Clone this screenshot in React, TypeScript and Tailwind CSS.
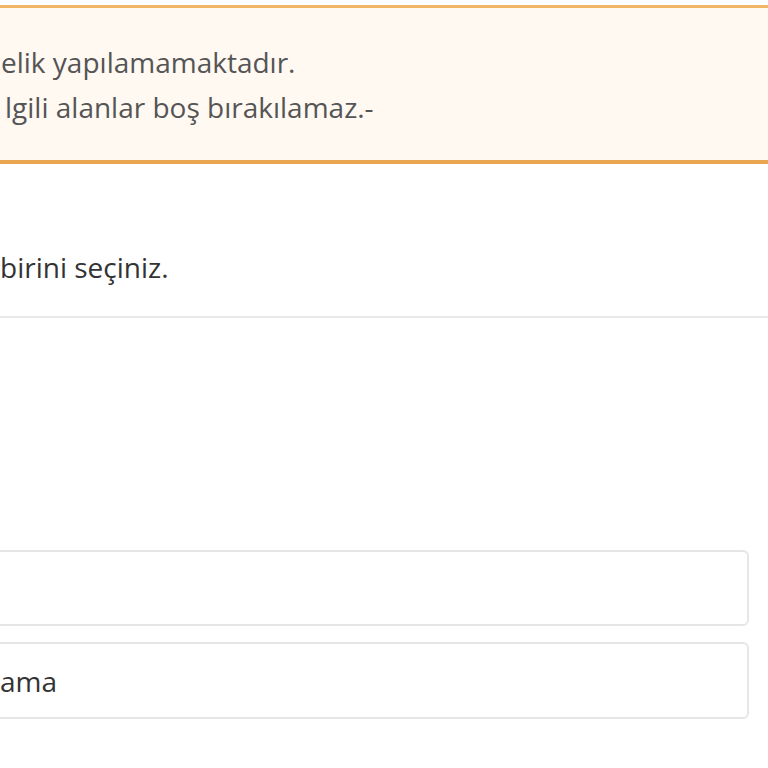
export default function App() {
  return (
    <div
      className="h-[768px] w-full overflow-hidden bg-white pt-[5px]"
      style={{ fontFamily: '"Open Sans", sans-serif' }}
    >
      {/* Warning alert */}
      <div className="border-t-[3px] border-b-[4px] border-t-[#f2b766] border-b-[#e9a54f] bg-[#fff9f2] pt-[32px] pb-[30px] text-[28px] leading-[45px] text-[#555555]">
        <p className="pl-[1px]">elik yapılamamaktadır.</p>
        <p className="pl-[5px]">lgili alanlar boş bırakılamaz.-</p>
      </div>

      {/* Selection hint */}
      <div className="mt-[81px] border-b-2 border-[#e8e8e8] pb-[26px] text-[28px] leading-[45px] text-[#333333]">
        <p>birini seçiniz.</p>
      </div>

      {/* Inputs */}
      <div className="mt-[232px] -ml-[10px] mr-[19px] flex flex-col gap-[16px]">
        <div className="h-[76px] rounded-[6px] border-2 border-[#e6e6e6] bg-white" />
        <div className="flex h-[77px] items-center rounded-[6px] border-2 border-[#e6e6e6] bg-white pl-[8px] text-[28px] text-[#333333]">
          ama
        </div>
      </div>
    </div>
  );
}
